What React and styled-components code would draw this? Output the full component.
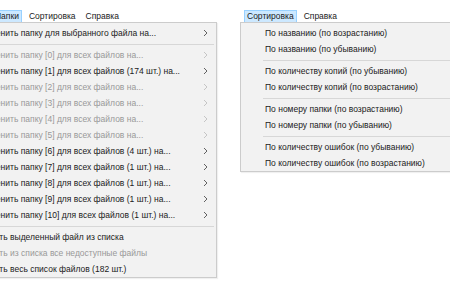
import styled, { createGlobalStyle } from "styled-components";

const GlobalStyle = createGlobalStyle`
  html, body {
    margin: 0;
    padding: 0;
    background: #ffffff;
  }
  body {
    font-family: "Liberation Sans", Arial, sans-serif;
    font-size: 8.5px;
    color: #1a1a1a;
  }
`;

const folderRows = [
  { n: 0, text: "для всех файлов на...", off: true },
  { n: 1, text: "для всех файлов (174 шт.) на..." },
  { n: 2, text: "для всех файлов на...", off: true },
  { n: 3, text: "для всех файлов на...", off: true },
  { n: 4, text: "для всех файлов на...", off: true },
  { n: 5, text: "для всех файлов на...", off: true },
  { n: 6, text: "для всех файлов (4 шт.) на..." },
  { n: 7, text: "для всех файлов (1 шт.) на..." },
  { n: 8, text: "для всех файлов (1 шт.) на..." },
  { n: 9, text: "для всех файлов (1 шт.) на..." },
  { n: 10, text: "для всех файлов (1 шт.) на..." },
];

const sortGroups = [
  ["По названию (по возрастанию)", "По названию (по убыванию)"],
  ["По количеству копий (по убыванию)", "По количеству копий (по возрастанию)"],
  ["По номеру папки (по возрастанию)", "По номеру папки (по убыванию)"],
  ["По количеству ошибок (по убыванию)", "По количеству ошибок (по возрастанию)"],
];

const Chevron = ({ off }) => (
  <svg width="5" height="8" viewBox="0 0 5 8">
    <polyline
      points="1,1 4,4 1,7"
      fill="none"
      stroke={off ? "#c0c0c0" : "#505050"}
      strokeWidth="0.9"
    />
  </svg>
);

const App = () => {
  return (
    <>
      <GlobalStyle />
      <Page>
        <Pane $shift="-45px" $width="262px">
          <MenuBar $lead="37px">
            <MenuTab $active>Папки</MenuTab>
            <MenuTab>Сортировка</MenuTab>
            <MenuTab>Справка</MenuTab>
          </MenuBar>
          <Dropdown>
            <Item>
              <Label>Изменить папку для выбранного файла на...</Label>
              <Chevron />
            </Item>
            <Separator />
            {folderRows.map((row) => (
              <Item key={row.n} $off={row.off}>
                <Label>
                  Изменить папку [{row.n}] {row.text}
                </Label>
                <Chevron off={row.off} />
              </Item>
            ))}
            <Separator />
            <Item>
              <Label>Убрать выделенный файл из списка</Label>
            </Item>
            <Item $off>
              <Label>Убрать из списка все недоступные файлы</Label>
            </Item>
            <Item>
              <Label>Убрать весь список файлов (182 шт.)</Label>
            </Item>
          </Dropdown>
        </Pane>
        <Pane $shift="23px" $width="240px">
          <MenuBar $lead="4px">
            <MenuTab $active>Сортировка</MenuTab>
            <MenuTab>Справка</MenuTab>
          </MenuBar>
          <Dropdown>
            {sortGroups.map((group, gi) => (
              <Group key={gi}>
                {gi > 0 && <Separator />}
                {group.map((label) => (
                  <Item key={label}>
                    <Label>{label}</Label>
                  </Item>
                ))}
              </Group>
            ))}
          </Dropdown>
        </Pane>
      </Page>
    </>
  );
};

export default App;

const Page = styled.div`
  width: 450px;
  height: 300px;
  overflow: hidden;
  display: flex;
  align-items: flex-start;
  padding-top: 10px;
  box-sizing: border-box;
`;

const Pane = styled.div`
  flex: none;
  margin-left: ${(props) => props.$shift};
  width: ${(props) => props.$width};
  display: flex;
  flex-direction: column;
`;

const MenuBar = styled.div`
  display: flex;
  align-items: stretch;
  gap: 4px;
  height: 12px;
  padding-left: ${(props) => props.$lead};
`;

const MenuTab = styled.div`
  display: flex;
  align-items: center;
  padding: 0 2px;
  border: 1px solid ${(props) => (props.$active ? "#99d1ff" : "transparent")};
  border-bottom: none;
  background: ${(props) => (props.$active ? "#cce8ff" : "transparent")};
  color: #1a1a1a;
  white-space: nowrap;
  line-height: 1;
`;

const Dropdown = styled.div`
  background: #f2f2f2;
  border: 1px solid #cccccc;
  padding-top: 2px;
  box-shadow: 1px 1px 1px rgba(0, 0, 0, 0.06);
`;

const Group = styled.div`
  display: flex;
  flex-direction: column;
`;

const Item = styled.div`
  display: flex;
  align-items: center;
  justify-content: space-between;
  height: 16px;
  padding: 0 8px 0 24px;
  color: ${(props) => (props.$off ? "#999999" : "#1a1a1a")};
  white-space: nowrap;
`;

const Label = styled.span`
  line-height: 1;
`;

const Separator = styled.div`
  height: 6px;
  display: flex;
  align-items: center;
  margin: 0 2px 0 22px;

  &::after {
    content: "";
    flex: 1;
    height: 1px;
    background: #d7d7d7;
  }
`;
